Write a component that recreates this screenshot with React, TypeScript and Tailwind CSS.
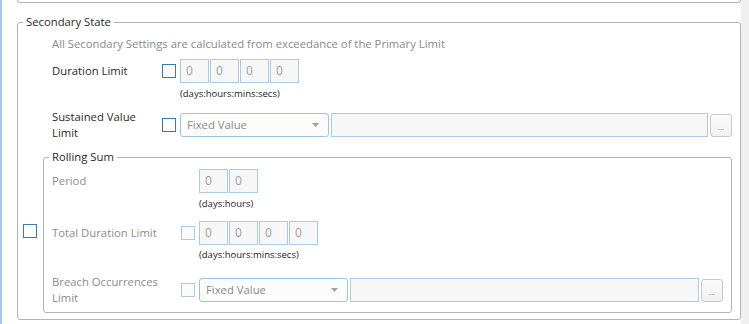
import React from 'react';

const cell = 'w-[29px] h-[24px] border border-[#a9cbe3] bg-[#f7f7f7] flex items-center pl-[5px] text-[12px] text-[#a0a0a0]';

function TimeBoxes({ count }: { count: number }) {
  return (
    <div className="flex gap-[1px]">
      {Array.from({ length: count }).map((_, i) => (
        <div key={i} className={cell}>0</div>
      ))}
    </div>
  );
}

function Check({ enabled }: { enabled?: boolean }) {
  return (
    <div
      className={
        enabled
          ? 'w-[14px] h-[14px] shrink-0 border border-[#3b78b8] bg-white'
          : 'w-[14px] h-[14px] shrink-0 border border-[#a9cbe6] bg-[#fbfbfb]'
      }
    />
  );
}

function ValuePicker() {
  return (
    <div className="flex-1 flex items-center gap-[2px]">
      <div className="w-[149px] h-[24px] shrink-0 border border-[#9fc2de] rounded-[3px] bg-[#fcfcfc] flex items-center justify-between pl-[6px] pr-[9px] text-[#8b8b8b]">
        <span>Fixed Value</span>
        <svg width="7" height="4" viewBox="0 0 7 4">
          <path d="M0 0h7L3.5 4z" fill="#a0a0a0" />
        </svg>
      </div>
      <div className="flex-1 h-[24px] border border-[#a9cbe3] bg-[#f7f7f7]" />
      <div className="w-[22px] h-[23px] shrink-0 border border-[#c9c9c9] rounded-[3px] bg-gradient-to-b from-[#fbfbfb] to-[#f1f1f1] flex items-center justify-center text-[8px] leading-none text-[#8a8a8a] pt-[3px]">
        ...
      </div>
    </div>
  );
}

function Hint({ text, indent }: { text: string; indent: string }) {
  return <div className={`${indent} text-[9.5px] leading-[14px] text-[#222]`}>{text}</div>;
}

export default function App() {
  return (
    <div className="w-[749px] h-[324px] flex bg-white overflow-hidden font-[family-name:'Open_Sans','Liberation_Sans',sans-serif] text-[11.3px]">
      <div className="w-[2px] shrink-0 bg-[#a6c8e6]" />
      <div className="w-[739px] shrink-0 pl-[15px] flex flex-col">
        <div className="w-[724px] h-[3px] border-x border-b border-[#b3b3b3] rounded-b-[3px]" />

        <fieldset className="mt-[11px] w-[724px] border border-[#b3b3b3] rounded-[3px] pl-[5px] pr-[8px] pb-[6px]">
          <legend className="px-[3px] leading-[16px] text-[#2a2a2a]">Secondary State</legend>

          <div className="mt-[6px] ml-[29px] leading-[16px] text-[#8a8a8a]">
            All Secondary Settings are calculated from exceedance of the Primary Limit
          </div>

          <div className="mt-[7px] ml-[29px] flex items-center">
            <div className="w-[110px] leading-[16px] text-[#2a2a2a]">Duration Limit</div>
            <Check enabled />
            <div className="ml-[4px]">
              <TimeBoxes count={4} />
            </div>
          </div>
          <Hint text="(days:hours:mins:secs)" indent="mt-[4px] ml-[157px]" />

          <div className="mt-[8px] ml-[29px] flex items-center">
            <div className="w-[110px] leading-[16px] text-[#2a2a2a]">
              Sustained Value
              <br />
              Limit
            </div>
            <Check enabled />
            <div className="ml-[4px] flex-1 flex">
              <ValuePicker />
            </div>
          </div>

          <div className="mt-[8px] flex items-center">
            <Check enabled />
            <fieldset className="ml-[6px] flex-1 border border-[#b3b3b3] rounded-[3px] pl-[8px] pr-[8px] pb-[6px]">
              <legend className="-ml-[3px] px-[3px] leading-[16px] text-[#2a2a2a]">Rolling Sum</legend>

              <div className="mt-[4px] flex items-center">
                <div className="w-[129px] leading-[16px] text-[#8d8d8d]">Period</div>
                <div className="ml-[18px]">
                  <TimeBoxes count={2} />
                </div>
              </div>
              <Hint text="(days:hours)" indent="mt-[4px] ml-[147px]" />

              <div className="mt-[10px] flex items-center">
                <div className="w-[129px] leading-[16px] text-[#8d8d8d]">Total Duration Limit</div>
                <Check />
                <div className="ml-[4px]">
                  <TimeBoxes count={4} />
                </div>
              </div>
              <Hint text="(days:hours:mins:secs)" indent="mt-[3px] ml-[147px]" />

              <div className="mt-[12px] flex items-center">
                <div className="w-[129px] leading-[16px] text-[#8d8d8d]">
                  Breach Occurrences
                  <br />
                  Limit
                </div>
                <Check />
                <div className="ml-[4px] flex-1 flex">
                  <ValuePicker />
                </div>
              </div>
            </fieldset>
          </div>
        </fieldset>
      </div>
      <div className="flex-1 bg-[#f0f0f0]" />
    </div>
  );
}
